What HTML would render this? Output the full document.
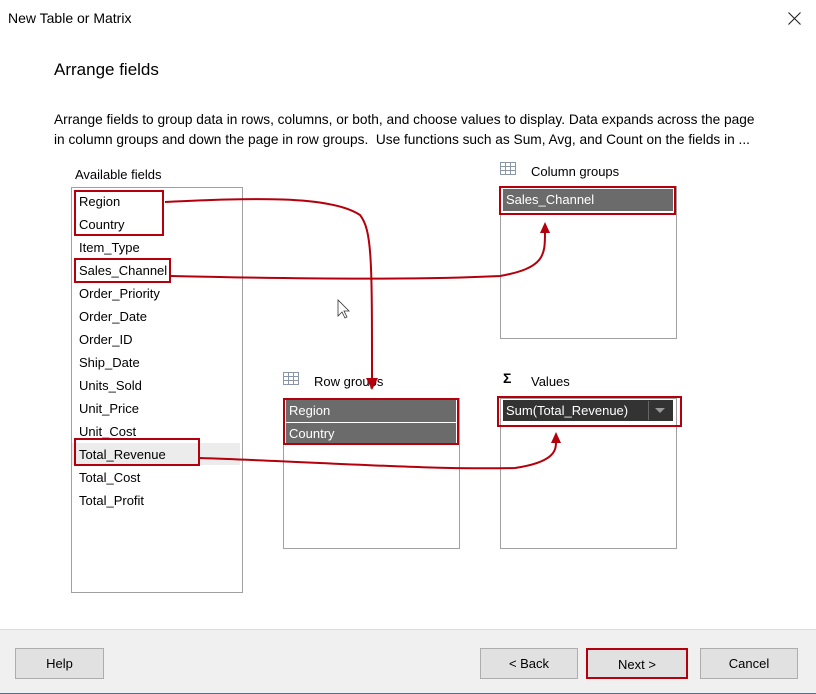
<!DOCTYPE html>
<html><head><meta charset="utf-8"><style>
*{margin:0;padding:0;box-sizing:border-box}
body{width:816px;height:694px;background:#fff;font-family:"Liberation Sans",sans-serif;color:#000;position:relative;overflow:hidden;font-size:13px}
.a{position:absolute;white-space:nowrap}
.box{position:absolute;border:1px solid #a0a0a0;background:#fff}
.it{position:absolute;left:79px;font-size:13px}
.dk{position:absolute;background:#6b6b6b;color:#fff;font-size:13px;padding-left:3px;line-height:22px}
.red{position:absolute;border:2px solid #b3000c}
.btn{position:absolute;top:648px;height:31px;background:#e1e1e1;border:1px solid #adadad;text-align:center;line-height:29px;font-size:13px}
</style></head><body>
<div class="a" style="left:8px;top:10px;font-size:14px">New Table or Matrix</div>
<svg class="a" style="left:788px;top:12px" width="13" height="13"><path d="M0.5 0.5L12.5 12.5M12.5 0.5L0.5 12.5" stroke="#222" stroke-width="1.1"/></svg>
<div class="a" style="left:54px;top:60px;font-size:17px">Arrange fields</div>
<div class="a" style="left:54px;top:112px;font-size:13.7px">Arrange fields to group data in rows, columns, or both, and choose values to display. Data expands across the page</div>
<div class="a" style="left:54px;top:132px;font-size:13.7px">in column groups and down the page in row groups.&nbsp; Use functions such as Sum, Avg, and Count on the fields in ...</div>
<div class="a" style="left:75px;top:167px">Available fields</div>
<div class="box" style="left:71px;top:187px;width:172px;height:406px"></div>
<div style="position:absolute;left:72px;top:443px;width:168px;height:22px;background:#ececec"></div>
<div class="it" style="top:194px">Region</div>
<div class="it" style="top:217px">Country</div>
<div class="it" style="top:240px">Item_Type</div>
<div class="it" style="top:263px">Sales_Channel</div>
<div class="it" style="top:286px">Order_Priority</div>
<div class="it" style="top:309px">Order_Date</div>
<div class="it" style="top:332px">Order_ID</div>
<div class="it" style="top:355px">Ship_Date</div>
<div class="it" style="top:378px">Units_Sold</div>
<div class="it" style="top:401px">Unit_Price</div>
<div class="it" style="top:424px">Unit_Cost</div>
<div class="it" style="top:447px">Total_Revenue</div>
<div class="it" style="top:470px">Total_Cost</div>
<div class="it" style="top:493px">Total_Profit</div>
<div class="red" style="left:74px;top:190px;width:90px;height:46px"></div>
<div class="red" style="left:74px;top:258px;width:97px;height:25px"></div>
<div class="red" style="left:74px;top:438px;width:126px;height:28px"></div>

<svg class="a" style="left:500px;top:162px" width="16" height="13"><g fill="none" stroke="#8a96a8"><rect x="0.5" y="0.5" width="15" height="12"/><path d="M0 4.5H16M0 8.5H16M5.5 0V13M10.5 0V13"/></g></svg>
<div class="a" style="left:531px;top:164px">Column groups</div>
<div class="box" style="left:500px;top:186px;width:177px;height:153px"></div>
<div class="dk" style="left:503px;top:189px;width:170px">Sales_Channel</div>
<div class="red" style="left:499px;top:186px;width:177px;height:29px"></div>

<svg class="a" style="left:283px;top:372px" width="16" height="13"><g fill="none" stroke="#8a96a8"><rect x="0.5" y="0.5" width="15" height="12"/><path d="M0 4.5H16M0 8.5H16M5.5 0V13M10.5 0V13"/></g></svg>
<div class="a" style="left:314px;top:374px">Row groups</div>
<div class="box" style="left:283px;top:398px;width:177px;height:151px"></div>
<div class="dk" style="left:286px;top:400px;width:170px">Region</div>
<div class="dk" style="left:286px;top:423px;width:170px">Country</div>
<div style="position:absolute;left:286px;top:422px;width:170px;height:1px;background:#fff"></div>
<div class="red" style="left:283px;top:398px;width:176px;height:47px"></div>

<div class="a" style="left:503px;top:370px;font-size:14px;font-weight:bold">Σ</div>
<div class="a" style="left:531px;top:374px">Values</div>
<div class="box" style="left:500px;top:398px;width:177px;height:151px"></div>
<div class="dk" style="left:503px;top:400px;width:170px;background:#333;line-height:21px;height:21px">Sum(Total_Revenue)</div>
<div style="position:absolute;left:648px;top:401px;width:1px;height:19px;background:#666"></div>
<div class="a" style="left:655px;top:408px;width:0;height:0;border-left:5px solid transparent;border-right:5px solid transparent;border-top:5px solid #999"></div>
<div class="red" style="left:497px;top:396px;width:185px;height:31px"></div>

<svg class="a" style="left:0;top:0" width="816" height="694">
<g fill="none" stroke="#b3000c" stroke-width="2">
<path d="M165 202 C250 198 330 195 360 215 C372 230 372 260 372 380"/>
<path d="M171 276 C300 279 420 280 500 276 C545 268 545 255 545 232"/>
<path d="M200 458 C320 462 430 470 515 468 C555 462 556 450 556 442"/>
</g>
<g fill="#b3000c">
<path d="M366 378 L378 378 L372 390 Z"/>
<path d="M540 233 L550 233 L545 222 Z"/>
<path d="M551 443 L561 443 L556 432 Z"/>
</g>
<path d="M338 300 L338 316 L342 312 L345 318 L347 317 L344 311 L349 311 Z" fill="#fff" stroke="#333" stroke-width="0.8"/>
</svg>

<div style="position:absolute;left:0;top:629px;width:816px;height:65px;background:#f0f0f0;border-top:1px solid #dcdcdc"></div>
<div class="btn" style="left:15px;width:89px">Help</div>
<div class="btn" style="left:480px;width:98px">&lt; Back</div>
<div class="btn" style="left:586px;width:102px;border:2px solid #b3000c">Next &gt;</div>
<div class="btn" style="left:700px;width:98px">Cancel</div>
<div style="position:absolute;left:0;top:693px;width:816px;height:1px;background:#2b79c2"></div>
</body></html>
